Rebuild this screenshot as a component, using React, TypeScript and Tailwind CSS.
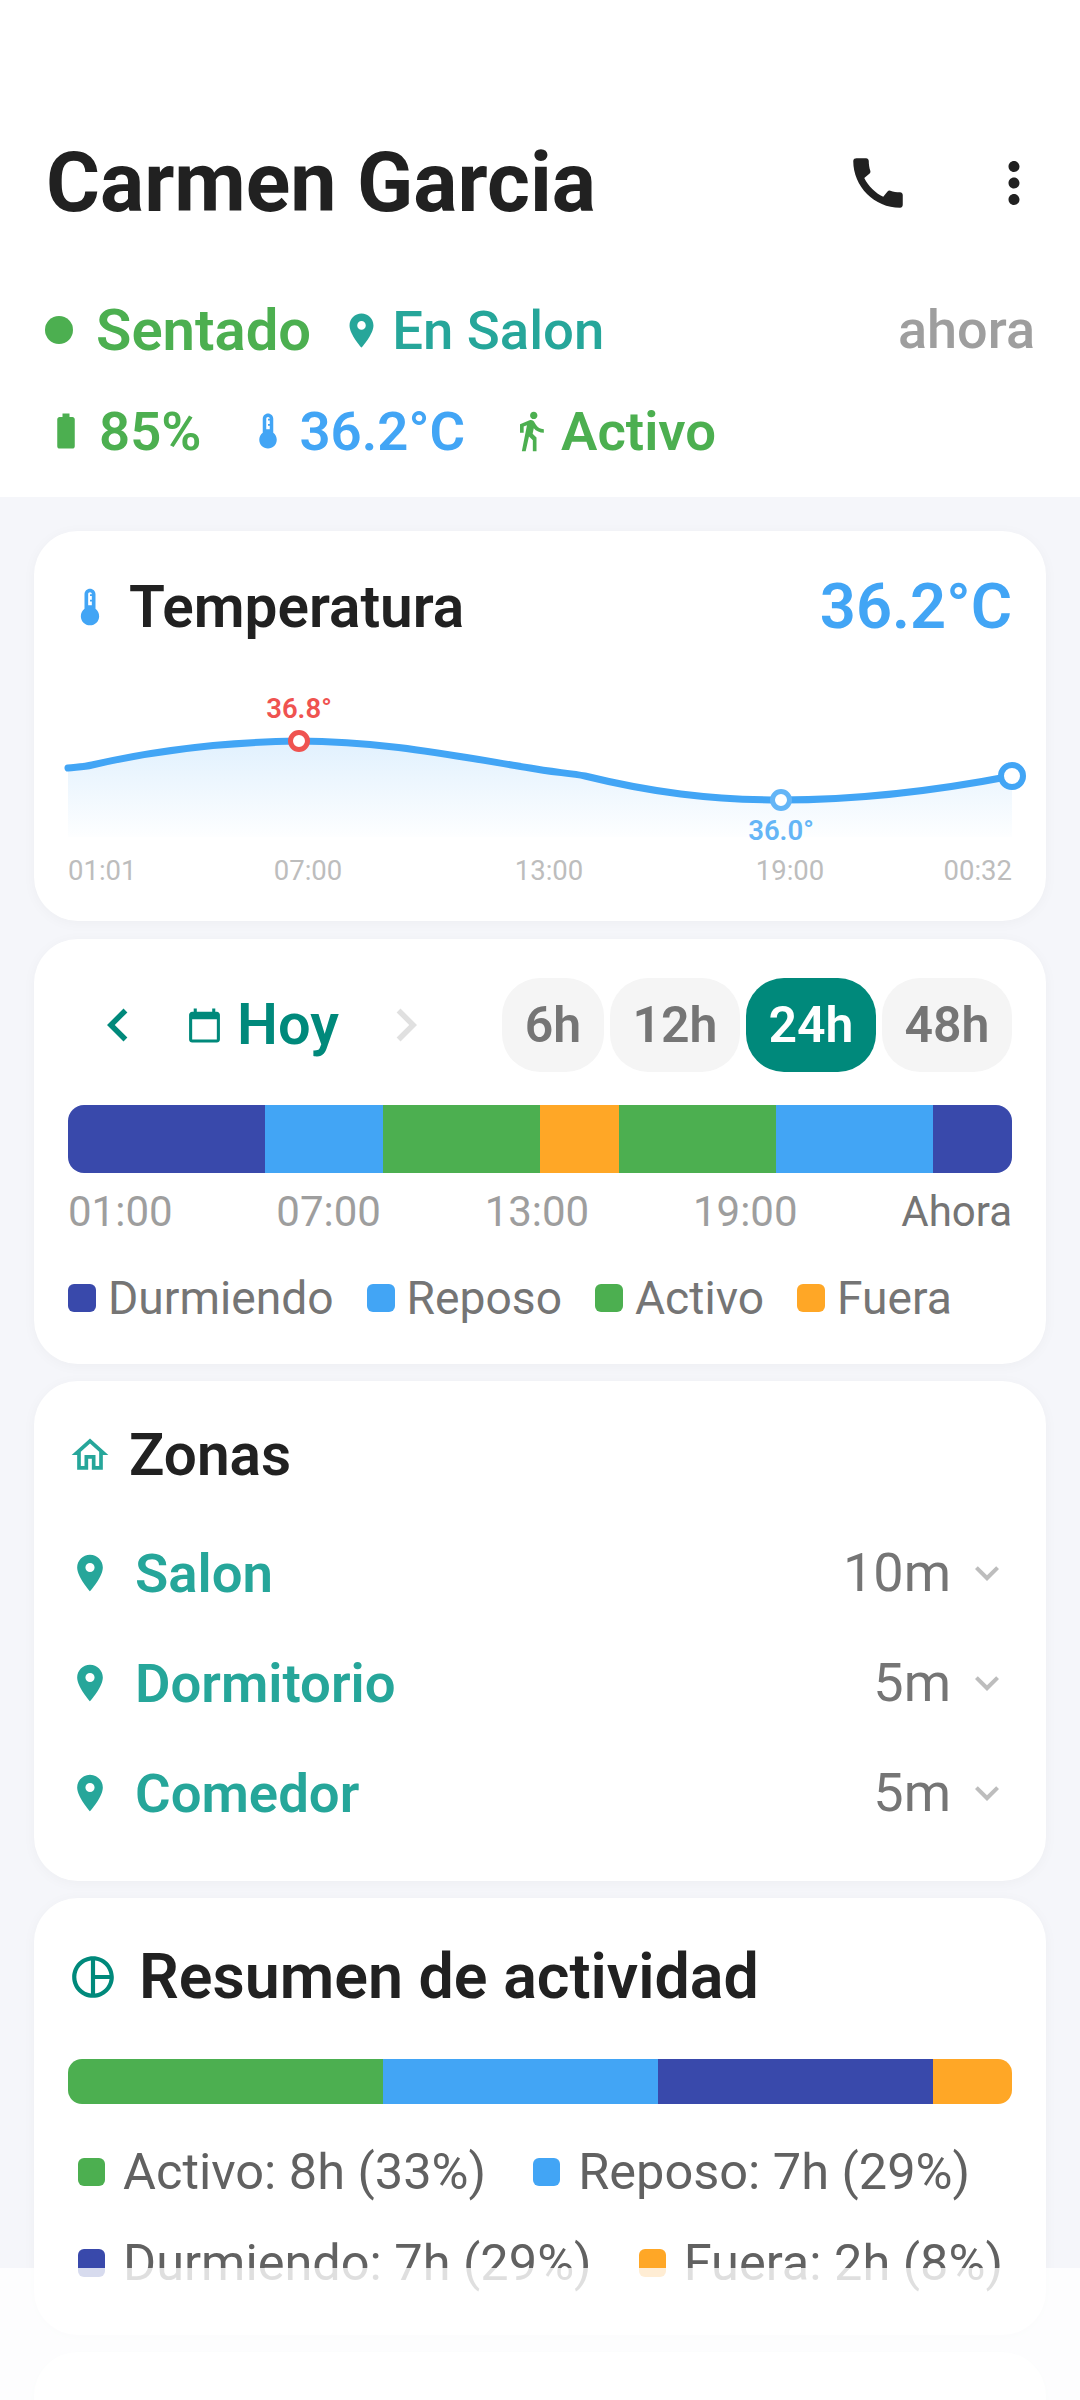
import React from "react";
import {
  MdCall,
  MdMoreVert,
  MdLocationOn,
  MdBatteryFull,
  MdDeviceThermostat,
  MdDirectionsWalk,
  MdCalendarToday,
  MdChevronLeft,
  MdChevronRight,
  MdOutlineHome,
  MdExpandMore,
  MdOutlinePieChart,
} from "react-icons/md";

const timeline = [
  { color: "bg-[#3949AB]", grow: "grow-[5]" },
  { color: "bg-[#42A5F5]", grow: "grow-[3]" },
  { color: "bg-[#4CAF50]", grow: "grow-[4]" },
  { color: "bg-[#FFA726]", grow: "grow-[2]" },
  { color: "bg-[#4CAF50]", grow: "grow-[4]" },
  { color: "bg-[#42A5F5]", grow: "grow-[4]" },
  { color: "bg-[#3949AB]", grow: "grow-[2]" },
];

const summary = [
  { color: "bg-[#4CAF50]", grow: "grow-[8]" },
  { color: "bg-[#42A5F5]", grow: "grow-[7]" },
  { color: "bg-[#3949AB]", grow: "grow-[7]" },
  { color: "bg-[#FFA726]", grow: "grow-[2]" },
];

const zones = [
  { name: "Salon", time: "10m" },
  { name: "Dormitorio", time: "5m" },
  { name: "Comedor", time: "5m" },
];

const Card = ({ className, children }: { className: string; children: React.ReactNode }) => (
  <section className={`bg-white rounded-[44px] mx-[34px] shadow-[0_2px_14px_rgba(0,0,40,0.035)] ${className}`}>
    {children}
  </section>
);

const TemperatureChart = () => (
  <svg width="1012" height="230" viewBox="0 0 1012 230" className="block -ml-[34px] mt-[24px]">
    <defs>
      <linearGradient id="tempFill" x1="0" y1="0" x2="0" y2="1">
        <stop offset="0" stopColor="#42A5F5" stopOpacity="0.16" />
        <stop offset="1" stopColor="#42A5F5" stopOpacity="0.01" />
      </linearGradient>
    </defs>
    <g transform="translate(-34 -664)">
      <path
        d="M68 768 C 76 767 84 767 92 765 C 160 749 230 742 298 741 C 380 741 450 755 530 768 C 550 772 570 773 585 776 C 650 792 710 800 781 800 C 860 800 940 790 1012 776 L1012 837 L68 837 Z"
        fill="url(#tempFill)"
      />
      <path
        d="M68 768 C 76 767 84 767 92 765 C 160 749 230 742 298 741 C 380 741 450 755 530 768 C 550 772 570 773 585 776 C 650 792 710 800 781 800 C 860 800 940 790 1012 776"
        fill="none"
        stroke="#42A5F5"
        strokeWidth="7"
        strokeLinecap="round"
      />
      <circle cx="299" cy="741" r="8.5" fill="#fff" stroke="#EF5350" strokeWidth="5" />
      <circle cx="781" cy="800" r="8.5" fill="#fff" stroke="#64B5F6" strokeWidth="5" />
      <circle cx="1012" cy="776" r="11" fill="#fff" stroke="#42A5F5" strokeWidth="6" />
      <g fontSize="27.5" fontWeight="600">
        <text x="299" y="718" textAnchor="middle" fill="#EF5350">36.8°</text>
        <text x="781" y="840" textAnchor="middle" fill="#64B5F6">36.0°</text>
      </g>
      <g fontSize="27.5" fill="#BDBDBD">
        <text x="68" y="880">01:01</text>
        <text x="308" y="880" textAnchor="middle">07:00</text>
        <text x="549" y="880" textAnchor="middle">13:00</text>
        <text x="790" y="880" textAnchor="middle">19:00</text>
        <text x="1012" y="880" textAnchor="end">00:32</text>
      </g>
    </g>
  </svg>
);

export default function App() {
  return (
    <div className="relative w-[1080px] h-[2400px] overflow-hidden bg-[#F5F6FA] font-['Roboto',sans-serif]">
      {/* Header */}
      <header className="bg-white h-[497px] pt-[136px] px-[46px]">
        <div className="flex items-center h-[94px]">
          <h1 className="text-[82.5px] leading-none font-bold text-[#212121] grow">Carmen Garcia</h1>
          <MdCall className="w-[66px] h-[66px] text-[#212121] mr-[70px]" />
          <MdMoreVert className="w-[66px] h-[66px] text-[#212121] -mr-[13px]" />
        </div>
        <div className="flex items-center mt-[70px] h-[60px]">
          <span className="w-[28px] h-[28px] rounded-full bg-[#4CAF50] -ml-[1px]" />
          <span className="ml-[23px] text-[58px] leading-none font-semibold text-[#4CAF50]">Sentado</span>
          <MdLocationOn className="ml-[30px] w-[41px] h-[41px] text-[#26A69A]" />
          <span className="ml-[10px] text-[54.5px] leading-none font-medium text-[#26A69A]">En Salon</span>
          <span className="ml-auto -mr-[1px] text-[54px] leading-none font-medium text-[#9E9E9E]">ahora</span>
        </div>
        <div className="flex items-center mt-[41px] h-[60px]">
          <MdBatteryFull className="w-[42px] h-[42px] text-[#4CAF50] -ml-[1px]" />
          <span className="ml-[12px] text-[54.5px] leading-none font-semibold text-[#4CAF50]">85%</span>
          <MdDeviceThermostat className="ml-[46px] w-[42px] h-[42px] text-[#42A5F5]" />
          <span className="ml-[10px] text-[54.5px] leading-none font-semibold text-[#42A5F5]">36.2°C</span>
          <MdDirectionsWalk className="ml-[44px] w-[44px] h-[44px] text-[#4CAF50]" />
          <span className="ml-[8px] text-[54.5px] leading-none font-semibold text-[#4CAF50]">Activo</span>
        </div>
      </header>

      {/* Temperature */}
      <Card className="mt-[34px] h-[390px] px-[34px] pt-[43px]">
        <div className="flex items-center h-[66px]">
          <MdDeviceThermostat className="w-[44px] h-[44px] text-[#42A5F5]" />
          <h2 className="ml-[17px] text-[58.5px] leading-none font-semibold text-[#212121]">Temperatura</h2>
          <span className="ml-auto text-[63.25px] leading-none font-semibold text-[#42A5F5]">36.2°C</span>
        </div>
        <TemperatureChart />
      </Card>

      {/* Activity timeline */}
      <Card className="mt-[18px] h-[425px] px-[34px] pt-[39px]">
        <div className="flex items-center h-[94px]">
          <MdChevronLeft className="w-[66px] h-[66px] text-[#00897B] ml-[17px]" />
          <MdCalendarToday className="ml-[35px] w-[37px] h-[37px] text-[#00897B]" />
          <span className="ml-[14px] text-[57.75px] leading-none font-semibold text-[#00897B]">Hoy</span>
          <MdChevronRight className="ml-[34px] w-[66px] h-[66px] text-[#E0E0E0]" />
          <div className="ml-auto flex gap-[6px]">
            {["6h", "12h", "24h", "48h"].map((label) => (
              <span
                key={label}
                className={`h-[94px] rounded-[38px] flex items-center justify-center text-[50px] leading-none font-semibold ${
                  label === "6h" ? "w-[102px]" : "w-[130px]"
                } ${label === "24h" ? "bg-[#00897B] text-white" : "bg-[#F5F5F5] text-[#757575]"}`}
              >
                {label}
              </span>
            ))}
          </div>
        </div>
        <div className="flex mt-[33px] h-[68px] rounded-[16px] overflow-hidden">
          {timeline.map((seg, i) => (
            <div key={i} className={`${seg.color} ${seg.grow}`} />
          ))}
        </div>
        <div className="flex justify-between items-center mt-[17px] h-[44px] text-[42px] leading-none text-[#9E9E9E]">
          <span>01:00</span>
          <span>07:00</span>
          <span>13:00</span>
          <span>19:00</span>
          <span className="text-[#757575]">Ahora</span>
        </div>
        <div className="flex items-center gap-[33px] mt-[39px] h-[50px] text-[46.2px] leading-none text-[#757575]">
          {[
            ["bg-[#3949AB]", "Durmiendo"],
            ["bg-[#42A5F5]", "Reposo"],
            ["bg-[#4CAF50]", "Activo"],
            ["bg-[#FFA726]", "Fuera"],
          ].map(([color, label]) => (
            <span key={label} className="flex items-center gap-[12px]">
              <span className={`w-[28px] h-[28px] rounded-[6px] ${color}`} />
              {label}
            </span>
          ))}
        </div>
      </Card>

      {/* Zones */}
      <Card className="mt-[17px] h-[500px] px-[34px] pt-[41px]">
        <div className="flex items-center h-[66px]">
          <MdOutlineHome className="w-[44px] h-[44px] text-[#26A69A]" />
          <h2 className="ml-[17px] text-[58.5px] leading-none font-semibold text-[#212121]">Zonas</h2>
        </div>
        <div className="mt-[52px] flex flex-col gap-[44px]">
          {zones.map((zone) => (
            <div key={zone.name} className="flex items-center h-[66px]">
              <MdLocationOn className="w-[44px] h-[44px] text-[#26A69A]" />
              <span className="ml-[23px] text-[54.5px] leading-none font-semibold text-[#26A69A]">{zone.name}</span>
              <span className="ml-auto text-[54px] leading-none text-[#757575]">{zone.time}</span>
              <MdExpandMore className="ml-[12px] mr-[1px] w-[48px] h-[48px] text-[#BDBDBD]" />
            </div>
          ))}
        </div>
      </Card>

      {/* Activity summary */}
      <Card className="mt-[17px] h-[437px] px-[34px] pt-[43px]">
        <div className="flex items-center h-[72px]">
          <MdOutlinePieChart className="w-[50px] h-[50px] text-[#00897B]" />
          <h2 className="ml-[21px] text-[62.7px] leading-none font-semibold text-[#212121]">Resumen de actividad</h2>
        </div>
        <div className="flex mt-[46px] h-[45px] rounded-[14px] overflow-hidden">
          {summary.map((seg, i) => (
            <div key={i} className={`${seg.color} ${seg.grow}`} />
          ))}
        </div>
        <div className="mt-[43px] flex flex-wrap gap-x-[47px] gap-y-[41px] pl-[10px] text-[50.5px] leading-[50px] text-[#616161]">
          {[
            ["bg-[#4CAF50]", "Activo: 8h (33%)"],
            ["bg-[#42A5F5]", "Reposo: 7h (29%)"],
            ["bg-[#3949AB]", "Durmiendo: 7h (29%)"],
            ["bg-[#FFA726]", "Fuera: 2h (8%)"],
          ].map(([color, label]) => (
            <span key={label} className="flex items-center gap-[18px]">
              <span className={`w-[27px] h-[28px] rounded-[6px] ${color}`} />
              {label}
            </span>
          ))}
        </div>
      </Card>

      <Card className="mt-[17px] h-[300px]">{null}</Card>

      {/* Translucent bottom fade over the scroll content */}
      <div className="absolute left-0 right-0 top-[2268px] bottom-0 bg-white/80" />
    </div>
  );
}
